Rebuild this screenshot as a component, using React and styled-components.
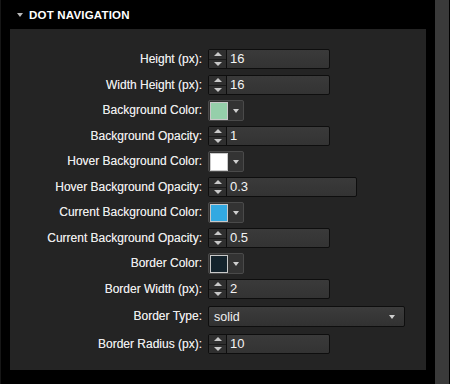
import React from "react";
import styled, { createGlobalStyle } from "styled-components";

const GlobalStyle = createGlobalStyle`
  html, body {
    margin: 0;
    padding: 0;
    background: #000;
  }
  body {
    font-family: "Liberation Sans", Arial, sans-serif;
  }
`;

// Styles
const Page = styled.div`
  display: flex;
  width: 450px;
  height: 384px;
  background: #000;
  overflow: hidden;
  border-left: 1px solid #161616;
  box-sizing: border-box;
`;

const Main = styled.div`
  flex: 1;
  display: flex;
  flex-direction: column;
`;

const Scrollbar = styled.div`
  width: 14px;
  margin-right: 1px;
  background: #3a3a3a;
`;

const Header = styled.div`
  display: flex;
  align-items: center;
  height: 29px;
  padding-left: 16px;
  gap: 6px;
  color: #fff;
  font-weight: bold;
  font-size: 11.5px;
  letter-spacing: 0.2px;
`;

const Caret = styled.span`
  width: 0;
  height: 0;
  border-left: 3.5px solid transparent;
  border-right: 3.5px solid transparent;
  border-top: 4px solid #b8b8b8;
  margin-top: 1px;
`;

const Panel = styled.div`
  margin: 0 9px 11px 9px;
  background: #242424;
  padding: 17px 0 13px 0;
  display: grid;
  grid-template-columns: 192px 1fr;
  column-gap: 6px;
  align-items: center;
`;

const Label = styled.div`
  text-align: right;
  color: #ececec;
  font-size: 12px;
  height: ${(p) => p.$h}px;
  line-height: ${(p) => p.$h}px;
  white-space: nowrap;
  text-shadow: 0 0 0.4px rgba(255, 255, 255, 0.6);
`;

const Cell = styled.div`
  display: flex;
  align-items: center;
  height: ${(p) => p.$h}px;
`;

const NumberField = styled.div`
  display: flex;
  height: 20px;
  width: ${(p) => p.$w}px;
  border: 1px solid #0e0e0e;
  border-radius: 2px;
  box-sizing: border-box;
  background: linear-gradient(#3a3a3a, #333);
`;

const Spinner = styled.div`
  width: 17px;
  display: flex;
  flex-direction: column;
  border-right: 1px solid #0e0e0e;
  background: #2f2f2f;
`;

const SpinHalf = styled.div`
  flex: 1;
  display: flex;
  align-items: center;
  justify-content: center;
  & + & {
    border-top: 1px solid #1a1a1a;
  }
`;

const Arrow = styled.span`
  width: 0;
  height: 0;
  border-left: 4px solid transparent;
  border-right: 4px solid transparent;
  ${(p) =>
    p.$up
      ? "border-bottom: 4px solid #c8c8c8;"
      : "border-top: 4px solid #c8c8c8;"}
`;

const Value = styled.div`
  flex: 1;
  color: #f4f4f4;
  font-size: 13px;
  line-height: 18px;
  padding-left: 3px;
`;

const ColorField = styled.div`
  display: flex;
  align-items: center;
  width: 36px;
  height: 21px;
  box-sizing: border-box;
  border: 1px solid #4a4a4a;
  border-radius: 2px;
  background: #333;
`;

const Swatch = styled.div`
  width: 18px;
  height: 18px;
  box-sizing: border-box;
  margin-left: 1px;
  border: 1px solid #c9c9c9;
  background: ${(p) => p.$color};
`;

const DropPart = styled.div`
  flex: 1;
  height: 100%;
  display: flex;
  align-items: center;
  justify-content: center;
`;

const SmallArrow = styled.span`
  width: 0;
  height: 0;
  border-left: 3.5px solid transparent;
  border-right: 3.5px solid transparent;
  border-top: 4px solid #cfcfcf;
`;

const Select = styled.div`
  display: flex;
  align-items: center;
  justify-content: space-between;
  width: 197px;
  height: 21px;
  box-sizing: border-box;
  border: 1px solid #0e0e0e;
  border-radius: 2px;
  padding: 0 9px 0 5px;
  background: linear-gradient(#3c3c3c, #313131);
  color: #f0f0f0;
  font-size: 12.5px;
`;

// Data
const rows = [
  { label: "Height (px):", type: "number", value: "16", w: 122 },
  { label: "Width Height (px):", type: "number", value: "16", w: 122 },
  { label: "Background Color:", type: "color", color: "#95cfaa" },
  { label: "Background Opacity:", type: "number", value: "1", w: 122 },
  { label: "Hover Background Color:", type: "color", color: "#ffffff" },
  { label: "Hover Background Opacity:", type: "number", value: "0.3", w: 149 },
  { label: "Current Background Color:", type: "color", color: "#33a9e1" },
  { label: "Current Background Opacity:", type: "number", value: "0.5", w: 122 },
  { label: "Border Color:", type: "color", color: "#14232c" },
  { label: "Border Width (px):", type: "number", value: "2", w: 122 },
  { label: "Border Type:", type: "select", value: "solid" },
  { label: "Border Radius (px):", type: "number", value: "10", w: 122 },
];

const heights = { number: 26, color: 25, select: 29 };

const Control = ({ row }) => {
  if (row.type === "color") {
    return (
      <ColorField>
        <Swatch $color={row.color} />
        <DropPart>
          <SmallArrow />
        </DropPart>
      </ColorField>
    );
  }
  if (row.type === "select") {
    return (
      <Select>
        <span>{row.value}</span>
        <SmallArrow />
      </Select>
    );
  }
  return (
    <NumberField $w={row.w}>
      <Spinner>
        <SpinHalf>
          <Arrow $up />
        </SpinHalf>
        <SpinHalf>
          <Arrow />
        </SpinHalf>
      </Spinner>
      <Value>{row.value}</Value>
    </NumberField>
  );
};

// Component
const App = () => {
  return (
    <>
      <GlobalStyle />
      <Page>
        <Main>
          <Header>
            <Caret />
            <span>DOT NAVIGATION</span>
          </Header>
          <Panel>
            {rows.map((row) => (
              <React.Fragment key={row.label}>
                <Label $h={heights[row.type]}>{row.label}</Label>
                <Cell $h={heights[row.type]}>
                  <Control row={row} />
                </Cell>
              </React.Fragment>
            ))}
          </Panel>
        </Main>
        <Scrollbar />
      </Page>
    </>
  );
};

export default App;
